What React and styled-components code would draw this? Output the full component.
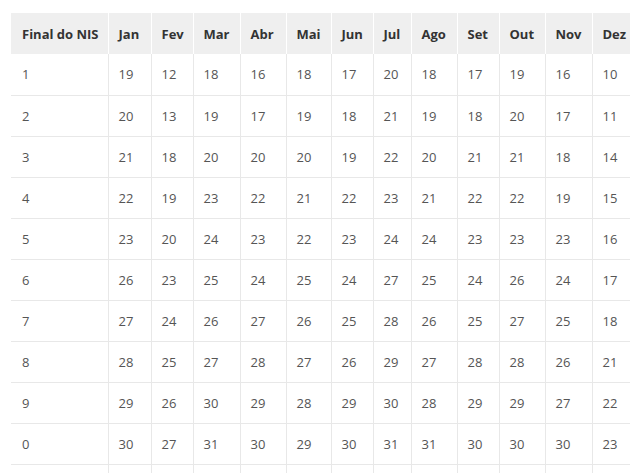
import React from 'react';
import styled, { createGlobalStyle } from 'styled-components';

const GlobalStyle = createGlobalStyle`
  body {
    margin: 0;
    background: #fff;
    font-family: "Open Sans", "Liberation Sans", sans-serif;
  }
`
const Wrapper = styled.div`
  padding: 13px 0 0 11px;
  width: 660px;
`
const Table = styled.table`
  border-collapse: collapse;
  table-layout: fixed;
  width: 627px;
  font-size: 13px;
`
const Col = styled.col`
  width: ${props => props.w}px;
`
const HeadCell = styled.th`
  background: #efefef;
  color: #333;
  font-weight: 700;
  text-align: left;
  height: 41px;
  padding: 0 0 0 10px;
  border-left: 1px solid #fff;
  white-space: nowrap;
  &:first-child {
    border-left: none;
    padding-left: 11px;
  }
`
const Row = styled.tr`
  border-bottom: 1px solid #e8e8e8;
`
const Cell = styled.td`
  color: #555;
  height: 41px;
  box-sizing: border-box;
  padding: 0 0 0 10px;
  border-left: 1px solid #e8e8e8;
  white-space: nowrap;
  &:first-child {
    border-left: none;
    padding-left: 11px;
  }
`

const widths = [97, 43, 42, 47, 46, 45, 42, 38, 46, 42, 46, 47, 46];
const months = ['Jan', 'Fev', 'Mar', 'Abr', 'Mai', 'Jun', 'Jul', 'Ago', 'Set', 'Out', 'Nov', 'Dez'];
const rows = [
  ['1', 19, 12, 18, 16, 18, 17, 20, 18, 17, 19, 16, 10],
  ['2', 20, 13, 19, 17, 19, 18, 21, 19, 18, 20, 17, 11],
  ['3', 21, 18, 20, 20, 20, 19, 22, 20, 21, 21, 18, 14],
  ['4', 22, 19, 23, 22, 21, 22, 23, 21, 22, 22, 19, 15],
  ['5', 23, 20, 24, 23, 22, 23, 24, 24, 23, 23, 23, 16],
  ['6', 26, 23, 25, 24, 25, 24, 27, 25, 24, 26, 24, 17],
  ['7', 27, 24, 26, 27, 26, 25, 28, 26, 25, 27, 25, 18],
  ['8', 28, 25, 27, 28, 27, 26, 29, 27, 28, 28, 26, 21],
  ['9', 29, 26, 30, 29, 28, 29, 30, 28, 29, 29, 27, 22],
  ['0', 30, 27, 31, 30, 29, 30, 31, 31, 30, 30, 30, 23],
  ['', '', '', '', '', '', '', '', '', '', '', '', ''],
];

function App() {
  return (
    <Wrapper>
      <GlobalStyle />
      <Table>
        <colgroup>
          {widths.map((w, i) => <Col key={i} w={w} />)}
        </colgroup>
        <thead>
          <tr>
            <HeadCell>Final do NIS</HeadCell>
            {months.map(m => <HeadCell key={m}>{m}</HeadCell>)}
          </tr>
        </thead>
        <tbody>
          {rows.map((r, i) => (
            <Row key={i}>
              {r.map((v, j) => <Cell key={j}>{v}</Cell>)}
            </Row>
          ))}
        </tbody>
      </Table>
    </Wrapper>
  );
}

export default App;
